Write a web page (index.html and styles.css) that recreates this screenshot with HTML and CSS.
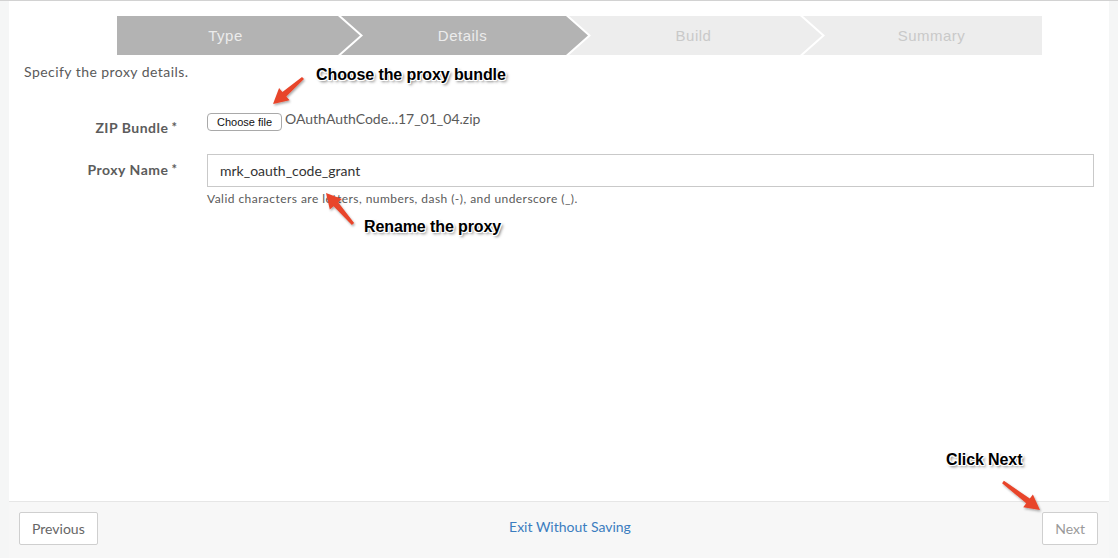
FILE: index.html
```html
<!DOCTYPE html>
<html lang="en">
<head>
<meta charset="utf-8">
<title>New Proxy - Details</title>
<link rel="stylesheet" href="styles.css">
</head>
<body>
<div class="page">
  <div class="main">
    <div class="wizard">
      <div class="step step-first step-done">Type</div>
      <div class="step step-mid step-done step-details">Details</div>
      <div class="step step-mid step-todo step-build">Build</div>
      <div class="step step-last step-todo">Summary</div>
    </div>
    <p class="intro">Specify the proxy details.</p>
    <div class="form">
      <div class="label label-zip">ZIP Bundle<span class="req">*</span></div>
      <div class="field field-file">
        <span class="file-btn">Choose file</span>
        <span class="file-name">OAuthAuthCode...17_01_04.zip</span>
      </div>
      <div class="label label-name">Proxy Name<span class="req">*</span></div>
      <div class="field">
        <div class="text-input">mrk_oauth_code_grant</div>
        <div class="help">Valid characters are letters, numbers, dash (-), and underscore (_).</div>
      </div>
    </div>
  </div>
  <div class="footer">
    <span class="btn">Previous</span>
    <a class="exit-link" href="#">Exit Without Saving</a>
    <span class="btn btn-disabled">Next</span>
  </div>
</div>

<div class="note note-bundle">Choose the proxy bundle</div>
<div class="note note-rename">Rename the proxy</div>
<div class="note note-next">Click Next</div>

<svg class="arrows" width="1118" height="558" viewBox="0 0 1118 558" xmlns="http://www.w3.org/2000/svg">
  <defs>
    <filter id="sh" x="-30%" y="-30%" width="160%" height="160%">
      <feDropShadow dx="1" dy="1.5" stdDeviation="1" flood-color="#000" flood-opacity="0.35"/>
    </filter>
  </defs>
  <g fill="#e8452b" filter="url(#sh)">
    <polygon points="302.0,75.9 282.4,90.9 279.1,87.1 273,103 289.6,99.2 286.3,95.4 304.0,78.1"/>
    <polygon points="354.1,222.0 338.1,201.3 341.9,198.1 326,192 329.8,208.6 333.6,205.3 351.9,224.0"/>
    <polygon points="1002.1,482.2 1026.2,502.3 1023.2,506.3 1040,509 1032.9,493.6 1029.8,497.6 1003.9,479.8"/>
  </g>
</svg>
</body>
</html>
```

FILE: styles.css
```css
* { box-sizing: border-box; }

html, body {
  margin: 0;
  padding: 0;
}

body {
  width: 1118px;
  height: 558px;
  overflow: hidden;
  background: #f5f6f6;
  border-top: 1px solid #d2d2d2;
  font-family: Lato, "Open Sans", sans-serif;
  color: #555;
  position: relative;
}

.page {
  height: 557px;
  padding: 0 9px;
  display: flex;
  flex-direction: column;
}

.main {
  flex: 1;
  background: #fff;
  padding: 15px 0 0 0;
}

/* wizard */
.wizard {
  display: flex;
  width: 925px;
  height: 39px;
  margin-left: 108px;
}

.step {
  flex: 0 0 auto;
  height: 39px;
  line-height: 39px;
  text-align: center;
  font-family: "Liberation Sans", Arial, sans-serif;
  font-size: 15px;
  letter-spacing: 0.5px;
}

.step-done { background: #b3b3b3; color: #ececec; }
.step-todo { background: #ededed; color: #c9c9c9; }

.step-first {
  width: 243px;
  padding-right: 26px;
  clip-path: polygon(0 0, calc(100% - 22px) 0, 100% 50%, calc(100% - 22px) 100%, 0 100%);
}

.step-mid {
  margin-left: -19px;
  padding: 0 24px 0 20px;
  clip-path: polygon(0 0, calc(100% - 22px) 0, 100% 50%, calc(100% - 22px) 100%, 0 100%, 22px 50%);
}

.step-details { width: 247px; }
.step-build { width: 253px; }

.step-last {
  width: 239px;
  margin-left: -19px;
  padding: 0 4px 0 22px;
  clip-path: polygon(0 0, 100% 0, 100% 100%, 0 100%, 22px 50%);
}

.intro {
  margin: 8px 0 0 15px;
  font-size: 14px;
  line-height: 18px;
  letter-spacing: 0.45px;
  color: #5a5a5a;
}

/* form */
.form {
  margin-top: 32px;
  padding-right: 15px;
  display: grid;
  grid-template-columns: 168px 1fr;
  column-gap: 30px;
  row-gap: 13px;
  align-items: start;
}

.label {
  text-align: right;
  font-weight: 700;
  font-size: 14px;
  color: #5c5c5c;
  letter-spacing: 0.5px;
}

.label-zip {
  padding-top: 5px;
  line-height: 19px;
}

.label-name {
  line-height: 31px;
}

.req {
  font-size: 13px;
  vertical-align: 1px;
  margin-left: 3px;
  font-weight: 700;
  letter-spacing: 0;
}

.field-file {
  display: flex;
  align-items: flex-start;
  height: 28px;
}

.file-btn {
  display: inline-block;
  height: 18px;
  width: 75px;
  border: 1px solid #a9a9a9;
  border-radius: 4px;
  background: #fff;
  font-family: "Liberation Sans", Arial, sans-serif;
  font-size: 11px;
  line-height: 16px;
  text-align: center;
  color: #111;
}

.file-name {
  margin-left: 3px;
  font-size: 14px;
  line-height: 12px;
  color: #5a5a5a;
}

.text-input {
  height: 33px;
  border: 1px solid #c9c9c9;
  padding-left: 12px;
  font-size: 14px;
  line-height: 31px;
  color: #333;
}

.help {
  margin-top: 5px;
  font-size: 12px;
  line-height: 14px;
  letter-spacing: 0.45px;
  color: #5a5a5a;
}

/* footer */
.footer {
  height: 57px;
  flex: none;
  background: #f7f7f7;
  border-top: 1px solid #e6e6e6;
  padding: 10px 11px 0 10px;
  display: flex;
  justify-content: space-between;
  align-items: flex-start;
}

.btn {
  display: inline-block;
  height: 33px;
  padding: 0 12px;
  border: 1px solid #cfcfcf;
  border-radius: 2px;
  background: #fff;
  font-size: 14px;
  line-height: 31px;
  color: #666;
}

.btn-disabled { color: #9a9a9a; }

.exit-link {
  margin-top: 6px;
  font-size: 14px;
  line-height: 18px;
  color: #3b7dbf;
  text-decoration: none;
}

/* annotations */
.note {
  position: absolute;
  font-family: "Liberation Sans", Arial, sans-serif;
  font-weight: 700;
  font-size: 16px;
  line-height: 18px;
  letter-spacing: -0.1px;
  color: #000;
  white-space: nowrap;
  text-shadow:
    -1px -1px 0 #fff, 1px -1px 0 #fff, -1px 1px 0 #fff, 1px 1px 0 #fff,
    0 -1px 0 #fff, 0 1px 0 #fff, -1px 0 0 #fff, 1px 0 0 #fff,
    2px 2px 3px rgba(0, 0, 0, 0.55);
}

.note-bundle { left: 316px; top: 65px; }
.note-rename { left: 364px; top: 217px; }
.note-next { left: 946px; top: 450px; }

.arrows {
  position: absolute;
  left: 0;
  top: 0;
  pointer-events: none;
}
```
